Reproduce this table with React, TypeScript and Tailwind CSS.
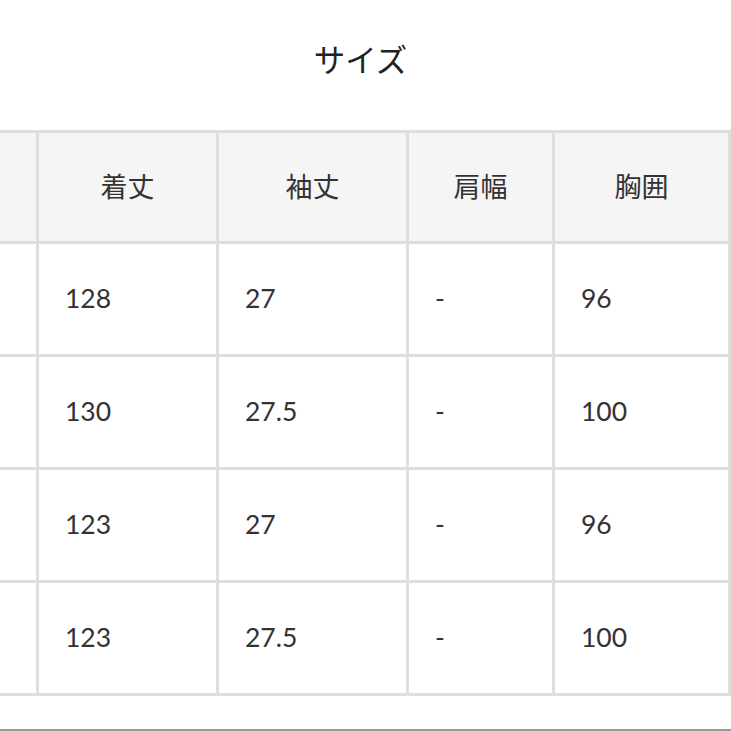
const headers = ["", "着丈", "袖丈", "肩幅", "胸囲"];

const rows = [
  ["", "128", "27", "-", "96"],
  ["", "130", "27.5", "-", "100"],
  ["", "123", "27", "-", "96"],
  ["", "123", "27.5", "-", "100"],
];

const font = "font-['Lato','Noto_Sans_CJK_JP',sans-serif]";

export default function App() {
  return (
    <div className={`w-[731px] h-[731px] overflow-hidden bg-white text-[#333] ${font}`}>
      <div className="h-[130px] pt-[40px] text-center">
        <h2 className="text-[31.5px] leading-[40px] text-[#222] pr-[10px]">サイズ</h2>
      </div>

      <table className="table-fixed border-separate border-spacing-0 w-[731px]">
        <colgroup>
          <col className="w-[39px]" />
          <col className="w-[180px]" />
          <col className="w-[190px]" />
          <col className="w-[146px]" />
          <col className="w-[176px]" />
        </colgroup>
        <thead>
          <tr>
            {headers.map((h, i) => (
              <th
                key={i}
                className="h-[114px] bg-[#f5f5f5] border-t-[3px] border-b-[3px] border-r-[3px] border-[#dedede] text-center align-middle font-normal text-[27px]"
              >
                {h}
              </th>
            ))}
          </tr>
        </thead>
        <tbody>
          {rows.map((r, ri) => (
            <tr key={ri}>
              {r.map((c, ci) => (
                <td
                  key={ci}
                  className="h-[113px] bg-white border-b-[3px] border-r-[3px] border-[#dedede] pl-[26px] align-middle text-[26.5px]"
                >
                  {c}
                </td>
              ))}
            </tr>
          ))}
        </tbody>
      </table>

      <div className="mt-[33px] h-[2px] bg-[#9a9a9a]" />
    </div>
  );
}
